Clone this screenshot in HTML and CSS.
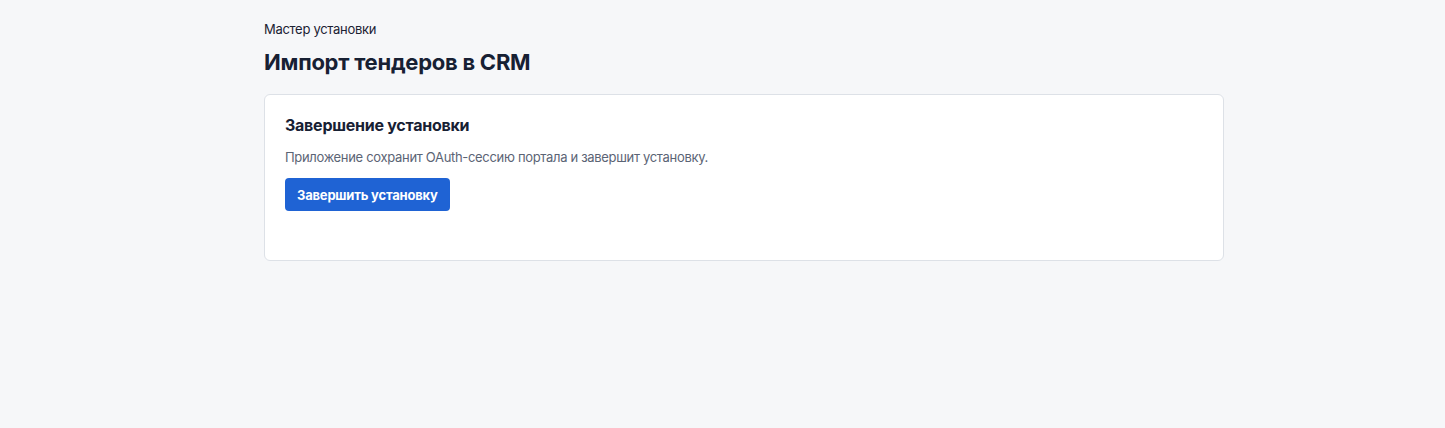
FILE: index.html
```html
<!DOCTYPE html>
<html lang="ru">
<head>
<meta charset="utf-8">
<title>Импорт тендеров в CRM</title>
<link rel="stylesheet" href="styles.css">
</head>
<body>
<main class="page">
  <div class="eyebrow">Мастер установки</div>
  <h1 class="title">Импорт тендеров в CRM</h1>
  <section class="card">
    <h2 class="card-title">Завершение установки</h2>
    <p class="card-text">Приложение сохранит OAuth-сессию портала и завершит установку.</p>
    <div class="actions">
      <button class="btn" type="button">Завершить установку</button>
    </div>
    <div class="status"></div>
  </section>
</main>
</body>
</html>
```
FILE: styles.css
```css
html, body {
  margin: 0;
  padding: 0;
  background: #f6f7f9;
  font-family: Inter, "Noto Sans", "Liberation Sans", sans-serif;
  color: #1b2233;
}
.page {
  width: 960px;
  margin-left: 264px;
  padding-top: 20px;
  display: flex;
  flex-direction: column;
}
.eyebrow {
  font-size: 13px;
  line-height: 18px;
  color: #1b2233;
  letter-spacing: -0.3px;
}
.title {
  margin: 10px 0 0;
  font-size: 22px;
  line-height: 28px;
  font-weight: 700;
  color: #172033;
  letter-spacing: -0.25px;
}
.card {
  margin-top: 18px;
  background: #ffffff;
  border: 1px solid #dde1e7;
  border-radius: 6px;
  padding: 18px 20px 20px;
  display: flex;
  flex-direction: column;
}
.card-title {
  margin: 0;
  font-size: 16px;
  line-height: 24px;
  font-weight: 700;
  color: #172033;
  letter-spacing: -0.25px;
}
.card-text {
  margin: 11px 0 0;
  font-size: 13px;
  line-height: 18px;
  color: #5b6475;
  letter-spacing: -0.32px;
}
.actions {
  margin-top: 12px;
  display: flex;
}
.btn {
  background: #1f63d4;
  color: #ffffff;
  border: none;
  border-radius: 4px;
  height: 33px;
  padding: 0 12px;
  font-family: inherit;
  font-size: 13px;
  font-weight: 700;
  letter-spacing: -0.2px;
}
.status {
  height: 29px;
}
```
